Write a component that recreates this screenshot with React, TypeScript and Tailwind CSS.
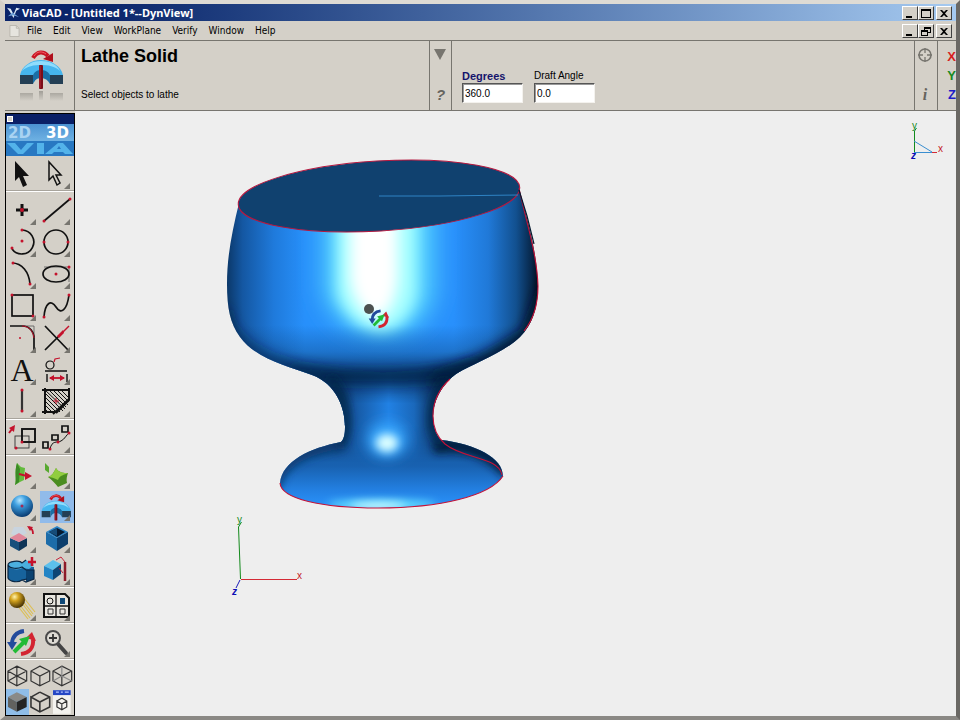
import type { ReactNode } from "react";

const RED = "#c4122c";
const INK = "#111111";

interface ToolDef {
  name: string;
  icon: ReactNode;
  active?: boolean;
  single?: boolean;
}

function Dot({ x, y }: { x: number; y: number }) {
  return <circle cx={x} cy={y} r="1.5" fill={RED} />;
}

function LatheGlyph() {
  return (
    <g>
      <path d="M1 28C3 19 12 13 22 13s20 6 22 15l-12 2c-2-4-6-5-10-5s-8 2-9 5Z" fill="#45b5ee" />
      <path d="M3 24C7 17 14 14 22 14s16 3 19 10c-5-5-12-6-19-6S8 19 3 24Z" fill="#8fdcfc" />
      <path d="M1 28h13v9H1ZM31 28h13v9H31Z" fill="#243f55" />
      <path d="M14 28c2-4 5-5 8-5s7 1 9 5v9c-2-4-5-6-9-6s-6 2-8 6Z" fill="#1b6fa5" />
      <rect x="20" y="18" width="4" height="24" rx="1" fill="#7c0d18" />
      <path d="M21 19v22" stroke="#b32735" />
      <path d="M14 11C18 4 25 4 29 9" fill="none" stroke="#c91522" strokeWidth="4" />
      <path d="M24 12l10-6 0 9Z" fill="#b00f1c" />
      <path d="M15 9c3-5 8-5 12-2" fill="none" stroke="#f2606a" />
    </g>
  );
}

function SpinArrows() {
  return (
    <g fill="none">
      <path d="M18 4C10 5 6 10 6 17" stroke="#234b9c" strokeWidth="4" />
      <path d="M1 15h10l-5 8Z" fill="#234b9c" />
      <path d="M27 12c1 9-4 14-12 15" stroke="#d32431" strokeWidth="4" />
      <path d="M20 11l6-6 4 9Z" fill="#d32431" />
      <path d="M8 25 19 14" stroke="#22bb36" strokeWidth="4" />
      <path d="M13 12l11-3-4 10Z" fill="#22bb36" />
    </g>
  );
}

const selectTools: ToolDef[] = [
  { name: "Select", single: true, icon: <path d="M9 2v20l4-4 4 10 4-2-4-9h6Z" fill={INK} /> },
  { name: "Deep select", icon: <path d="M9 3v18l4-4 4 9 3-2-4-8h5Z" fill="none" stroke={INK} strokeWidth="1.5" /> },
];

const drawTools: ToolDef[] = [
  {
    name: "Point",
    icon: (
      <>
        <path d="M16 9v12M10 15h12" stroke={INK} strokeWidth="3" />
        <circle cx="16" cy="15" r="2" fill={RED} />
      </>
    ),
  },
  {
    name: "Line",
    icon: (
      <>
        <path d="M4 26 30 4" stroke={INK} strokeWidth="1.7" />
        <Dot x={4} y={26} />
        <Dot x={30} y={4} />
      </>
    ),
  },
  {
    name: "Arc by center",
    icon: (
      <>
        <path d="M16 3a12 12 0 1 1-10 19" fill="none" stroke={INK} strokeWidth="1.7" />
        <Dot x={16} y={3} />
        <Dot x={16} y={14} />
        <Dot x={6} y={21} />
      </>
    ),
  },
  {
    name: "Circle",
    icon: (
      <>
        <circle cx="16" cy="15" r="12" fill="none" stroke={INK} strokeWidth="1.7" />
        <Dot x={4} y={15} />
        <Dot x={28} y={15} />
      </>
    ),
  },
  {
    name: "Conic",
    icon: (
      <>
        <path d="M6 4C16 4 23 13 24 25" fill="none" stroke={INK} strokeWidth="1.7" />
        <Dot x={7} y={4} />
        <Dot x={24} y={25} />
      </>
    ),
  },
  {
    name: "Ellipse",
    icon: (
      <>
        <path d="M4 8h25v15" fill="none" stroke="#555555" strokeWidth="0.8" />
        <ellipse cx="16" cy="15" rx="13" ry="8" fill="none" stroke={INK} strokeWidth="1.7" />
        <Dot x={16} y={15} />
        <Dot x={29} y={8} />
      </>
    ),
  },
  {
    name: "Rectangle",
    icon: (
      <>
        <rect x="6" y="4" width="21" height="21" fill="none" stroke={INK} strokeWidth="1.7" />
        <Dot x={6} y={4} />
        <Dot x={27} y={25} />
      </>
    ),
  },
  {
    name: "Spline",
    icon: (
      <>
        <path d="M4 26C5 12 11 8 16 16s11 3 13-12" fill="none" stroke={INK} strokeWidth="1.7" />
        <Dot x={4} y={26} />
        <Dot x={29} y={4} />
      </>
    ),
  },
  {
    name: "Fillet",
    icon: (
      <>
        <path d="M16 3h12v12" fill="none" stroke="#555555" strokeWidth="0.8" />
        <path d="M4 3h12c8 0 12 6 12 12v12" fill="none" stroke={INK} strokeWidth="1.7" />
        <path d="M16 3c6 0 11 4 12 12" fill="none" stroke={RED} strokeWidth="1" />
        <circle cx="14" cy="15" r="1" fill={RED} />
      </>
    ),
  },
  {
    name: "Trim",
    icon: (
      <>
        <path d="M5 3 29 28M5 27 19 13" stroke={INK} strokeWidth="1.7" />
        <path d="M18 14 29 3" stroke={RED} strokeWidth="1.5" />
        <path d="m17 13 6-6 1 3-5 5Z" fill={RED} />
      </>
    ),
  },
  {
    name: "Text",
    icon: (
      <text x="16" y="26" textAnchor="middle" fontSize="32" fontFamily="Liberation Serif, serif" fill={INK}>
        A
      </text>
    ),
  },
  {
    name: "Dimension",
    icon: (
      <>
        <circle cx="10" cy="10" r="4" fill="none" stroke={INK} strokeWidth="1.2" />
        <path d="m14 7 1-3 5-1" fill="none" stroke={RED} strokeWidth="1.2" />
        <path d="M5 16h22M7 19v8M27 19v8" stroke={INK} strokeWidth="1.4" />
        <path d="M10 23h14" stroke={RED} strokeWidth="1.8" />
        <path d="m9 23 5-3v6ZM25 23l-5-3v6Z" fill={RED} />
      </>
    ),
  },
  {
    name: "Center line",
    icon: (
      <>
        <path d="M16 3v21" stroke="#333333" strokeWidth="2.2" />
        <Dot x={16} y={3} />
        <Dot x={16} y={24} />
      </>
    ),
  },
  {
    name: "Hatch",
    icon: (
      <>
        <path
          d="m5 6 18 18M5 10l15 15M5 14l11 11M5 18l7 7M5 22l3 3M5 3l20 19M9 3l17 17M13 3l15 15M17 3l12 12M21 3l8 8"
          stroke={INK}
          strokeWidth="1"
        />
        <path d="M2 3h27M5 1v26M2 25h14M29 1v12L16 26M13 27l16-15" fill="none" stroke={INK} strokeWidth="2" />
        <path d="M16 11v6M13 14h6" stroke={RED} />
      </>
    ),
  },
];

const transformTools: ToolDef[] = [
  {
    name: "Scale",
    icon: (
      <>
        <rect x="9" y="13" width="14" height="12" fill="none" stroke="#333333" strokeWidth="0.9" />
        <rect x="16" y="6" width="13" height="13" fill="none" stroke={INK} strokeWidth="1.9" />
        <path d="m3 10 3-4" stroke={RED} strokeWidth="2" />
        <path d="M3 5 9 2 8 9Z" fill={RED} />
        <Dot x={10} y={25} />
        <Dot x={16} y={19} />
      </>
    ),
  },
  {
    name: "Copy along path",
    icon: (
      <>
        <path d="M10 26C12 17 17 20 21 18s5-6 9-9" fill="none" stroke={INK} />
        <path d="M3 19h5v6H3ZM12 12h6v5h-6ZM22 3h6v6h-6Z" fill="none" stroke={INK} strokeWidth="1.7" />
        <Dot x={10} y={26} />
        <Dot x={18} y={19} />
        <Dot x={29} y={10} />
      </>
    ),
  },
];

const solidTools: ToolDef[] = [
  {
    name: "Plane",
    icon: (
      <>
        <path d="m11 4 4 4 4 1-1 12-4 2-5 3c2-6-1-12 2-22Z" fill="#63bb3d" />
        <path d="m11 4 3 6-1 13-4 3c2-6-1-12 2-22Z" fill="#3b8b25" />
        <path d="m13 15 8 2" stroke={RED} strokeWidth="2" />
        <path d="m19 13 7 4-7 4Z" fill={RED} />
      </>
    ),
  },
  {
    name: "Surface",
    icon: (
      <>
        <path d="m5 4 4 4v6l-4-3Z" fill="#57a92f" />
        <path d="M8 18c4-1 6-5 8-9 3 5 8 5 12 5-1 3-2 6-1 10l-9 4c-3-4-6-7-10-10Z" fill="#4a8c1f" />
        <path d="M8 18c4-1 6-5 8-9 3 5 8 5 12 5-4 2-8 2-10 7-4-2-7-3-10-3Z" fill="#91cd3f" />
      </>
    ),
  },
  {
    name: "Sphere",
    icon: (
      <>
        <circle cx="16" cy="15" r="11" fill="url(#ball)" />
        <circle cx="16" cy="15" r="1.5" fill="#a32b55" />
      </>
    ),
  },
  {
    name: "Lathe Solid",
    active: true,
    icon: (
      <g transform="translate(1 1) scale(0.68)">
        <LatheGlyph />
      </g>
    ),
  },
  {
    name: "Blend",
    icon: (
      <>
        <path d="M5 11 8 4h9l4 6-8 4Z" fill="#c9d4df" />
        <path d="m4 15 9 4v9l-9-5Z" fill="#174f7c" />
        <path d="m13 19 8-4v8l-8 5Z" fill="#0e3457" />
        <path d="m4 15 9-5 8 5-8 4Z" fill="#e08699" />
        <path d="M27 11c0-4-1-5-4-7" fill="none" stroke={RED} strokeWidth="1.8" />
        <path d="m21 3 6 1-3 4Z" fill={RED} />
      </>
    ),
  },
  {
    name: "Shell",
    icon: (
      <>
        <path d="m6 9 11-6 11 6-11 6Z" fill="#2c86c8" />
        <path d="m9 9 8-4 8 4-8 5Z" fill="#071b31" />
        <path d="m6 9 11 6v13L6 21Z" fill="#1c6ca9" />
        <path d="m17 15 11-6v12l-11 7Z" fill="#0c3e6c" />
        <path d="m9 9 8-4v8Z" fill="#164c78" />
      </>
    ),
  },
  {
    name: "Boolean add",
    icon: (
      <>
        <path d="M2 10v13c2 4 10 5 14 2l12-1V12Z" fill="#17639c" />
        <path d="M20 15h8v9l-8 3Z" fill="#0b4270" />
        <path d="M2 10c0-4 12-5 14-2l4-3 8 5-5 4-7-1c-4 3-14 1-14-3Z" fill="#4bb0df" />
        <path d="M2 10v13c2 4 10 5 14 2l5-1M2 10c0-4 12-5 14-2l4-3M2 10c2 4 10 4 14 2l4 3h8v9l-8 3-4-2" fill="none" stroke="#0a2744" strokeWidth="1.2" />
        <path d="M26 2v9M22 7h8" stroke={RED} strokeWidth="2.5" />
      </>
    ),
  },
  {
    name: "Draft face",
    icon: (
      <>
        <path d="m4 11 9-6 8 4-8 6Z" fill="#5cc0ec" />
        <path d="m4 11 9 4v10l-9-4Z" fill="#2385c5" />
        <path d="m13 15 8-6v10l-8 6Z" fill="#0d4574" />
        <path d="m16 5 5-3 4 5M19 13l4 5" fill="none" stroke={RED} strokeWidth="0.9" />
        <path d="M25 7v19" stroke="#8d1b29" strokeWidth="2.5" />
      </>
    ),
  },
];

const renderTools: ToolDef[] = [
  {
    name: "Lights",
    icon: (
      <>
        <path d="m18 7 11 14M15 11l11 14M11 14l11 14M16 9l11 14M13 13l11 14" stroke="#dcbf55" strokeWidth="1.2" />
        <circle cx="11" cy="9" r="8" fill="url(#gold)" />
      </>
    ),
  },
  {
    name: "Sheets",
    icon: (
      <>
        <path d="M4 3h21l4 4v19H4Z" fill="#e8e6e0" stroke={INK} strokeWidth="2" />
        <path d="M16 4v22M4 15h25" stroke={INK} strokeWidth="1.3" />
        <circle cx="10" cy="10" r="3" fill="none" stroke={INK} />
        <path d="M20 7h5v6h-5Z" fill="#0d4777" />
        <path d="M8 18h5v5H8ZM20 18h5v5h-5Z" fill="none" stroke="#333333" />
      </>
    ),
  },
];

const viewTools: ToolDef[] = [
  { name: "Rotate view", icon: <SpinArrows /> },
  {
    name: "Zoom",
    icon: (
      <>
        <path d="m18 17 8 9" stroke="#444444" strokeWidth="4" strokeLinecap="round" />
        <circle cx="13" cy="11" r="7" fill="#dedbd4" stroke="#4a4a4a" strokeWidth="2" />
        <path d="M13 7v8M9 11h8" stroke="#333333" strokeWidth="1.8" />
      </>
    ),
  },
];

const HEX = "M11 3 21 8v10l-10 5L2 18V8Z";

const displayModes: ToolDef[] = [
  { name: "Wireframe", icon: <path d={`${HEX}M2 8l9 5 10-5M11 13v10M11 3v10M2 18l9-5 10 5`} /> },
  { name: "Hidden line", icon: <path d={`${HEX}M2 8l9 5 10-5M11 13v10`} /> },
  {
    name: "Hidden dashed",
    icon: (
      <>
        <path d={`${HEX}M2 8l9 5 10-5M11 13v10`} />
        <path d="M11 3v10L2 18M11 13l10 5" stroke="#888888" />
      </>
    ),
  },
  {
    name: "Shaded",
    active: true,
    icon: (
      <g stroke="none">
        <path d="M11 3 21 8l-10 5-9-5Z" fill="#8a8a88" />
        <path d="m2 8 9 5v10l-9-5Z" fill="#62625f" />
        <path d="m11 13 10-5v10l-10 5Z" fill="#242424" />
      </g>
    ),
  },
  { name: "Shaded edges", icon: <path d="M11 3 21 8v10l-10 5-9-5V8l9 5 10-5M2 8l9-5M11 13v10" strokeWidth="1.6" /> },
  {
    name: "Render settings",
    icon: (
      <g>
        <path d="M2 1h18v24H2Z" fill="#f4f3ef" stroke="none" />
        <path d="M2 1h18v5H2Z" fill="#2547c4" stroke="none" />
        <path d="M5 3h3M10 3h2M14 3h4" stroke="#b6c6ff" />
        <path d="m11 9 5 3v6l-5 3-5-3v-6l5 3 5-3M6 12l5-3M11 15v6" />
      </g>
    ),
  },
];

function ToolButton({ tool }: { tool: ToolDef }) {
  return (
    <button
      type="button"
      aria-label={tool.name}
      title={tool.name}
      className={tool.active ? "block bg-[#91bbea]" : "block"}
    >
      <svg viewBox="0 0 34 32" className="block h-8 w-full overflow-visible">
        {tool.icon}
        {!tool.single && <path d="M30 24v6h-6Z" fill="#77756f" />}
      </svg>
    </button>
  );
}

function ToolGroup({ tools }: { tools: ToolDef[] }) {
  return (
    <div className="mb-[3px] grid grid-cols-2 border-b border-white shadow-[0_-1px_0_#a8a49c_inset]">
      {tools.map((tool) => (
        <ToolButton key={tool.name} tool={tool} />
      ))}
    </div>
  );
}

function Palette() {
  return (
    <aside className="mt-0.5 w-[70px] shrink-0 border border-black bg-[#d4d0c8]">
      <div className="flex h-[10px] items-center bg-[#0a1f66]">
        <span className="ml-px size-[6px] border border-white bg-[#d4d0c8]" />
      </div>
      <div className="h-8">
        <svg viewBox="0 0 68 32" className="block h-8 w-full">
          <rect width="68" height="32" fill="url(#banner)" />
          <rect y="17" width="68" height="15" fill="#2878c2" />
          <g fontFamily="DejaVu Sans, sans-serif" fontWeight="bold">
            <text x="2" y="14" fontSize="15" fill="#a9d3f2">2D</text>
            <text x="40" y="14" fontSize="15" fill="#ffffff">3D</text>
          </g>
          <path d="M1 19h8l6 7 6-7h7L17 30h-5ZM31 19h7v11h-7ZM39 30l13-11h5l10 11h-8l-2-2h-9l-2 2Zm12-5h4l-2-3Z" fill="#53b3ea" />
        </svg>
      </div>
      <div className="pt-[3px]">
        <ToolGroup tools={selectTools} />
        <ToolGroup tools={drawTools} />
        <ToolGroup tools={transformTools} />
        <ToolGroup tools={solidTools} />
        <ToolGroup tools={renderTools} />
        <ToolGroup tools={viewTools} />
      </div>
      <div className="grid grid-cols-3">
        {displayModes.map((mode) => (
          <button
            key={mode.name}
            type="button"
            aria-label={mode.name}
            className={mode.active ? "block bg-[#8fbde8]" : "block"}
          >
            <svg viewBox="0 0 23 26" className="block h-[26px] w-full" fill="none" stroke="#333333" strokeWidth="1.2">
              {mode.icon}
            </svg>
          </button>
        ))}
      </div>
    </aside>
  );
}

const SILHOUETTE =
  "M239 203C232 232 227 256 227 284C227 308 230 323 240 337C256 359 288 366 312 375C336 384 345 407 345 427C345 434 344 439 341 442C310 448 282 461 280 483C281 499 322 508 378 508C440 508 490 496 503 476C503 458 476 444 441 440C436 435 433 427 433 416C433 401 442 384 456 374C474 363 502 354 520 337C532 325 538 308 538 286C537 252 528 222 519 188Z";

function Blur({ id, amount }: { id: string; amount: number }) {
  return (
    <filter id={id} filterUnits="userSpaceOnUse" x="150" y="100" width="480" height="480">
      <feGaussianBlur stdDeviation={amount} />
    </filter>
  );
}

function Scene() {
  return (
    <svg className="block h-full w-full" aria-label="Lathed goblet">
      <defs>
        <clipPath id="body">
          <path d={SILHOUETTE} />
        </clipPath>
        <linearGradient id="bowl" gradientUnits="userSpaceOnUse" x1="227" x2="538" y1="0" y2="0">
          <stop offset="0" stopColor="#0b3869" />
          <stop offset="0.05" stopColor="#1457a2" />
          <stop offset="0.15" stopColor="#1f7adb" />
          <stop offset="0.25" stopColor="#2790fb" />
          <stop offset="0.73" stopColor="#2890fc" />
          <stop offset="0.84" stopColor="#2079d8" />
          <stop offset="0.93" stopColor="#12508f" />
          <stop offset="0.98" stopColor="#072648" />
          <stop offset="1" stopColor="#03101f" />
        </linearGradient>
        <linearGradient id="shade" gradientUnits="userSpaceOnUse" x1="0" x2="0" y1="325" y2="378">
          <stop offset="0" stopColor="#06305f" stopOpacity="0" />
          <stop offset="0.5" stopColor="#06305f" stopOpacity="0.3" />
          <stop offset="1" stopColor="#052a54" stopOpacity="0.85" />
        </linearGradient>
        <linearGradient id="stem" gradientUnits="userSpaceOnUse" x1="337" x2="440" y1="0" y2="0">
          <stop offset="0" stopColor="#0a2f58" />
          <stop offset="0.18" stopColor="#1659a4" />
          <stop offset="0.5" stopColor="#2181e4" />
          <stop offset="0.75" stopColor="#1a68bb" />
          <stop offset="1" stopColor="#09284b" />
        </linearGradient>
        <linearGradient id="foot" gradientUnits="userSpaceOnUse" x1="0" x2="0" y1="430" y2="510">
          <stop offset="0" stopColor="#1558a2" />
          <stop offset="0.45" stopColor="#1861b0" />
          <stop offset="0.75" stopColor="#2380e2" />
          <stop offset="1" stopColor="#2b96ff" />
        </linearGradient>
        <linearGradient id="fade" gradientUnits="userSpaceOnUse" x1="0" x2="0" y1="372" y2="462">
          <stop offset="0" stopColor="#000000" />
          <stop offset="0.35" stopColor="#ffffff" />
          <stop offset="0.6" stopColor="#ffffff" />
          <stop offset="1" stopColor="#000000" />
        </linearGradient>
        <mask id="stemMask" maskUnits="userSpaceOnUse" x="220" y="370" width="320" height="100">
          <rect x="220" y="370" width="320" height="100" fill="url(#fade)" />
        </mask>
        <Blur id="soft4" amount={4} />
        <Blur id="soft8" amount={7} />
        <Blur id="soft12" amount={12} />
      </defs>
      <g transform="translate(-75 -111)">
        <g clipPath="url(#body)">
          <rect x="220" y="150" width="330" height="275" fill="url(#bowl)" />
          <path d="M324 170h110v125q-10 38-50 41-44-2-60-41Z" fill="#56d5ff" filter="url(#soft12)" />
          <path d="M337 170h80v124q-8 34-36 38-32-4-44-38Z" fill="#a6ffff" filter="url(#soft8)" />
          <path d="M350 170h48v110q-4 34-20 38-22-4-28-38Z" fill="#ffffff" filter="url(#soft8)" />
          <rect x="220" y="325" width="330" height="100" fill="url(#shade)" />
          <path
            d="M224 310C232 360 300 376 385 382C470 378 540 350 544 296"
            fill="none" stroke="#041e3c" strokeWidth="7" filter="url(#soft8)"
          />
          <path d="M430 383L480 365L530 336L548 290" fill="none" stroke="#03152b" strokeWidth="14" filter="url(#soft8)" />
          <rect x="260" y="424" width="260" height="90" fill="url(#foot)" />
          <g mask="url(#stemMask)">
            <rect x="260" y="370" width="260" height="100" fill="url(#stem)" />
          </g>
          <path d="M290 372C340 379 430 379 480 367" fill="none" stroke="#062448" strokeWidth="8" filter="url(#soft8)" />
          <path d="M434 448C464 440 492 455 508 474" fill="none" stroke="#031b37" strokeWidth="11" filter="url(#soft4)" />
          <path d="M344 444C310 448 280 462 276 488" fill="none" stroke="#0b376b" strokeWidth="9" filter="url(#soft4)" />
          <path d="M330 378C349 400 350 430 340 445M446 380C428 404 430 430 440 444" fill="none" stroke="#06264a" strokeWidth="7" filter="url(#soft4)" />
          <ellipse cx="387" cy="440" rx="20" ry="17" fill="#39a8ff" filter="url(#soft8)" />
          <ellipse cx="387" cy="443" rx="11" ry="9" fill="#dcffff" filter="url(#soft4)" />
          <ellipse cx="382" cy="505" rx="54" ry="5" fill="#6ae8ff" filter="url(#soft4)" />
          <ellipse cx="378" cy="506" rx="28" ry="3" fill="#e8ffff" filter="url(#soft4)" />
        </g>
        <ellipse cx="379" cy="196" rx="141" ry="35" transform="rotate(-3.5 379 196)" fill="#10416f" stroke="#b5183f" />
        <path d="M379 196h61l78-1" fill="none" stroke="#2f83c4" />
        <g fill="none" stroke="#c41238" strokeWidth="1.1">
          <path d="M519 188C524 214 537 252 538 286C538 304 533 320 524 331" />
          <path d="M450 379C438 390 433 404 433 416C433 427 437 437 445 444C463 459 499 457 502 475" />
          <path d="M280 483C281 499 322 508 378 508C440 508 490 496 503 476" />
        </g>
        <path d="m519 190 8 26 7 28" fill="none" stroke="#071a30" strokeWidth="1.2" />

        {/* rotate cursor */}
        <circle cx="369" cy="309" r="5" fill="#4c5150" />
        <g transform="translate(368 308) scale(0.7)">
          <SpinArrows />
        </g>

        {/* world axes */}
        <g fill="none" strokeWidth="1">
          <path d="M240.500 579L238.500 527l3-5" stroke="#138a1c" />
          <path d="M241 579.500h56" stroke="#d42a35" />
          <path d="m240 580-4 8" stroke="#1a1ab8" />
        </g>
        <g fontFamily="Liberation Sans, sans-serif" fontSize="10">
          <text x="237" y="523" fill="#138a1c">y</text>
          <text x="297" y="579" fill="#c41826">x</text>
          <text x="232" y="595" fill="#0c0cb4" fontWeight="bold" fontStyle="italic">z</text>
        </g>
      </g>
    </svg>
  );
}

function ViewTriad() {
  return (
    <svg width="40" height="42" className="absolute top-2 right-2" aria-label="View orientation">
      <g fill="none">
        <path d="M6.500 33V12l2-3" stroke="#138a1c" />
        <path d="M6 33.500h18M6 22l18 11" stroke="#3a8ed0" />
        <path d="M24 33.500h5" stroke="#d42a35" />
      </g>
      <g fontFamily="Liberation Sans, sans-serif" fontSize="10">
        <text x="4" y="10" fill="#138a1c">y</text>
        <text x="30" y="33" fill="#c41826">x</text>
        <text x="3" y="40" fill="#0c0cb4" fontWeight="bold" fontStyle="italic">z</text>
      </g>
    </svg>
  );
}

const captionPaths = {
  minimize: "M3 9h6v2H3Z",
  maximize: "M2 2h10v9H2Zm1 2v6h8V4Z",
  restore: "M5 2h7v6H9v3H2V5h3Zm1 2v1h3v2h2V4ZM3 7v3h5V7Z",
  close: "M3 3h2l2 2 2-2h2L8 6.500 11 10H9L7 8l-2 2H3l3-3.500Z",
};

function CaptionButton({ kind }: { kind: keyof typeof captionPaths }) {
  return (
    <button
      type="button"
      aria-label={kind}
      className={`h-[14px] w-4 border border-white border-r-[#404040] border-b-[#404040] bg-[#d4d0c8] ${kind === "close" ? "ml-0.5" : ""}`}
    >
      <svg viewBox="0 0 14 12" className="block h-3 w-full">
        <path d={captionPaths[kind]} fillRule="evenodd" />
      </svg>
    </button>
  );
}

function Field({ id, label, value, bold }: { id: string; label: string; value: string; bold?: boolean }) {
  return (
    <div className="flex w-[61px] flex-col">
      <label
        htmlFor={id}
        className={bold ? "text-[11px] leading-[14px] font-bold whitespace-nowrap text-[#14146c]" : "text-[10px] leading-[14px] whitespace-nowrap"}
      >
        {label}
      </label>
      <input
        id={id}
        defaultValue={value}
        className="h-5 w-full border border-[#f4f2ee] border-t-[#555555] border-l-[#555555] bg-white px-0.5 text-[10px] shadow-[inset_1px_1px_0_#999999] outline-none"
      />
    </div>
  );
}

const menus = ["File", "Edit", "View", "WorkPlane", "Verify", "Window", "Help"];

export default function App() {
  return (
    <div className="flex min-h-screen flex-col border-t-4 border-r-4 border-b-4 border-l-[5px] border-t-[#dedbd4] border-r-[#6a6864] border-b-[#8a8884] border-l-[#d4d0c8] bg-[#d4d0c8] font-['Liberation_Sans',Arial,sans-serif] text-black">
      <svg className="absolute size-0">
        <defs>
          <linearGradient id="banner" x1="0" x2="0" y1="0" y2="1">
            <stop offset="0" stopColor="#4b92d2" />
            <stop offset="0.5" stopColor="#6db0e2" />
          </linearGradient>
          <radialGradient id="ball" cx="0.4" cy="0.25" r="0.75">
            <stop offset="0" stopColor="#b5e6ff" />
            <stop offset="0.35" stopColor="#3d9fe0" />
            <stop offset="1" stopColor="#0a3c72" />
          </radialGradient>
          <radialGradient id="gold" cx="0.35" cy="0.3" r="0.75">
            <stop offset="0" stopColor="#fff3b0" />
            <stop offset="0.35" stopColor="#d3a21d" />
            <stop offset="1" stopColor="#3d2b05" />
          </radialGradient>
        </defs>
      </svg>

      <header className="flex h-[17px] items-center bg-linear-to-r from-[#0a246a] from-10% to-[#a6caf0] pr-1">
        <svg viewBox="0 0 14 14" className="mr-0.5 ml-0.5 size-[13px]">
          <path d="m0 2 4 1 3 6 3-7 4 1-4 2-3 8-4-7Z" fill="#dce9f6" />
          <path d="m1 11 5-4 7 5-6-2Z" fill="#6e9fd6" />
        </svg>
        <h1 className="flex-1 font-['Noto_Sans',sans-serif] text-[11px] leading-4 font-bold text-white">
          ViaCAD - [Untitled 1*--DynView]
        </h1>
        <CaptionButton kind="minimize" />
        <CaptionButton kind="maximize" />
        <CaptionButton kind="close" />
      </header>

      <nav className="flex h-[19px] items-center pr-1 font-['DejaVu_Sans_Condensed','DejaVu_Sans',sans-serif] text-[10px]">
        <svg viewBox="0 0 12 14" className="mr-[7px] ml-1 h-[14px] w-[11px]">
          <path d="M1 1h7l3 3v9H1Z" fill="#e6e4de" stroke="#b9b6ae" />
          <path d="M8 1v3h3" fill="none" stroke="#b9b6ae" />
        </svg>
        <div className="flex flex-1 gap-[11px]">
          {menus.map((menu) => (
            <button key={menu} type="button">
              {menu}
            </button>
          ))}
        </div>
        <CaptionButton kind="minimize" />
        <CaptionButton kind="restore" />
        <CaptionButton kind="close" />
      </nav>

      <section className="flex h-[71px] border-y border-[#77756f]">
        <div className="flex w-[70px] justify-center border-r border-[#77756f] pt-1.5 pl-1">
          <svg viewBox="0 0 46 58" className="h-[58px] w-[46px]">
            <defs>
              <linearGradient id="mirror" x1="0" x2="0" y1="0" y2="1">
                <stop offset="0" stopColor="#a19e97" />
                <stop offset="1" stopColor="#d4d0c8" />
              </linearGradient>
            </defs>
            <LatheGlyph />
            <path d="M1 46h13v8H1ZM31 46h13v8H31ZM20 44h4v9h-4Z" fill="url(#mirror)" />
          </svg>
        </div>
        <div className="flex flex-1 basis-0 flex-col justify-between pt-1 pb-2 pl-1.5">
          <h2 className="text-[18px] leading-[22px] font-bold">Lathe Solid</h2>
          <p className="text-[10px] leading-[14px]">Select objects to lathe</p>
        </div>
        <div className="flex w-[23px] flex-col items-center justify-between border-x border-[#77756f] pt-2 pb-1.5">
          <button type="button" aria-label="Options">
            <svg viewBox="0 0 12 11" className="block h-[11px] w-3">
              <path d="M0 0h12L6 11Z" fill="#77756f" />
            </svg>
          </button>
          <button type="button" aria-label="Help" className="text-[15px] leading-[18px] font-bold text-[#66645f] italic">
            ?
          </button>
        </div>
        <div className="flex flex-[1.299] basis-0 items-end gap-[11px] pb-[7px] pl-2.5">
          <Field id="degrees" label="Degrees" value="360.0" bold />
          <Field id="draft" label="Draft Angle" value="0.0" />
        </div>
        <div className="flex w-6 flex-col items-center justify-between border-x border-[#77756f] pt-[7px] pb-1.5 pr-0.5">
          <button type="button" aria-label="Snap">
            <svg viewBox="0 0 14 14" className="block size-[14px]" fill="none" stroke="#77756f">
              <circle cx="7" cy="7" r="6" strokeWidth="1.6" />
              <path d="M7 0v5M7 9v5M0 7h5M9 7h5" strokeWidth="1.3" />
            </svg>
          </button>
          <button
            type="button"
            aria-label="Info"
            className="font-['Liberation_Serif',serif] text-[16px] leading-[18px] font-bold text-[#66645f] italic"
          >
            i
          </button>
        </div>
        <div className="flex w-[18px] flex-col items-end pt-1.5 text-[13px] leading-[19px] font-bold">
          <span className="text-[#d81e1e]">X</span>
          <span className="text-[#178a1e]">Y</span>
          <span className="text-[#1d1dc8]">Z</span>
        </div>
      </section>

      <div className="flex flex-1">
        <Palette />
        <main className="relative flex-1 bg-[#eeeeee]">
          <div className="absolute inset-0">
            <Scene />
          </div>
          <ViewTriad />
        </main>
      </div>
    </div>
  );
}
